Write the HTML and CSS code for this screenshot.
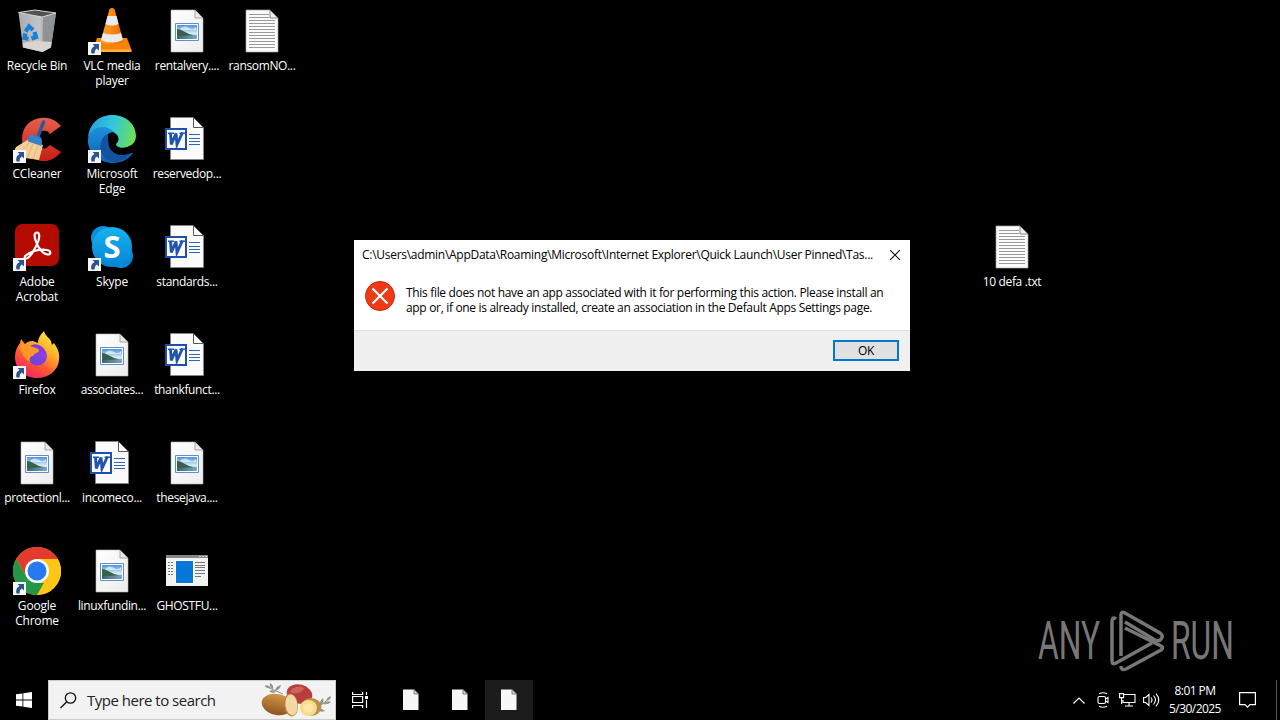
FILE: index.html
```html
<!DOCTYPE html>
<html lang="en">
<head>
  <meta charset="UTF-8">
  <meta name="viewport" content="width=device-width, initial-scale=1.0">
  <title>Desktop</title>
  <link rel="stylesheet" href="styles.css">
</head>
<body>
  <!-- shared icons -->
  <svg class="sprites" width="0" height="0">
    <defs>
      <linearGradient id="paper" x1="0" y1="0" x2="1" y2="1"><stop offset="0" stop-color="#fff"/><stop offset="1" stop-color="#ececec"/></linearGradient>
      <linearGradient id="sky" x1="0" y1="0" x2="0" y2="1"><stop offset="0" stop-color="#4f93dc"/><stop offset=".6" stop-color="#d5ecf8"/><stop offset="1" stop-color="#9cc4da"/></linearGradient>
      <linearGradient id="water" x1="0" y1="0" x2="1" y2="0"><stop offset="0" stop-color="#3a6474"/><stop offset="1" stop-color="#7eabc4"/></linearGradient>
    </defs>
    <symbol id="arrow" viewBox="0 0 13 13">
      <path fill="#f6f6f6" d="M0 0h13v13H0z"/>
      <path fill="#2c5590" d="M4.500 2H11v6.500L8.900 6.400C7 7.600 6.400 9.200 6.800 11.500H3.500C2.500 8 3.900 5.700 6.500 4.100z"/>
    </symbol>
    <symbol id="image" viewBox="0 0 48 48">
      <path fill="url(#paper)" stroke="#b5b5b5" stroke-width=".6" d="M8 3h24l8 8v34H8z"/>
      <path fill="#e9e9e9" stroke="#8a8a8a" stroke-width=".7" d="M32 3v8h8z"/>
      <path fill="#fff" stroke="#5f8fc0" d="M12.500 16.500h23v17h-23z"/>
      <path fill="url(#sky)" d="M14 18h20v14H14z"/>
      <path fill="#fff" opacity=".6" d="M18 21q4-3 8 0t7-1v3H17z"/>
      <path fill="url(#water)" d="M14 28h20v4H14z"/>
      <path fill="#376249" d="M14 22q4 0 7 2.500 4 2.500 10 3.800l-17 1z"/>
    </symbol>
    <symbol id="text" viewBox="0 0 48 48">
      <path fill="#fbfbfb" stroke="#a5a5a5" stroke-width=".7" d="M8 3h24l8 8v34H8z"/>
      <path stroke="#999" stroke-width="1" d="M11 7.500h20M11 10.500h20M11 13.500h26M11 16.500h26M11 19.500h26M11 22.500h26M11 25.500h26M11 28.500h26M11 31.500h26M11 34.500h26M11 37.500h26M11 40.500h26"/>
      <path fill="#eee" stroke="#6d6d6d" stroke-width=".8" d="M32 3v8h8z"/>
    </symbol>
    <symbol id="word" viewBox="0 0 48 48">
      <path fill="#fbfbfb" stroke="#888" stroke-width=".7" d="M7.500 2.500h23l10 10v32h-33z"/>
      <path fill="#fff" stroke="#444" stroke-width=".9" d="M30.500 2.500v10h10z"/>
      <path stroke="#2e65b8" d="M26 19.500h11M26 23.500h11M26 26.500h11M26 29.500h11"/>
      <path fill="#fff" stroke="#1d50ae" stroke-width="2" d="M3 14h20v20H3z"/>
      <path fill="none" stroke="#2153b0" stroke-width="2.900" d="M7.500 18l.8 11.500L13 18.500l1 11 5.500-12"/>
      <path stroke="#2153b0" stroke-width="1.500" d="M5 18.200h6M16.500 18.200h5.500"/>
    </symbol>
    <symbol id="blank" viewBox="0 0 16 22">
      <path fill="#f7f7f7" d="M0 .5h11l4.500 4.500v16H0z"/>
      <path fill="#ddd" stroke="#666" stroke-width=".8" d="M11 .5V5h4.500z"/>
    </symbol>
  </svg>

  <main class="desktop">
    <div class="column">
      <div class="item">
        <svg class="icon" viewBox="0 0 48 48">
          <defs><linearGradient id="bin" x1="0" x2="1"><stop offset="0" stop-color="#a9acaf"/><stop offset=".55" stop-color="#c3c5c7"/><stop offset="1" stop-color="#85888b"/></linearGradient></defs>
          <path fill="url(#bin)" d="M5.500 5.500L27 9.500 43 6l-5 34.500L29.500 45 10 40.500z"/>
          <path fill="#909396" d="M30 9.500L43 6l-5 34.500-8.500 4.500z"/>
          <path fill="#dad5cf" d="M9.500 36l14-2 15 1-.8 5.500-8.200 4.500-19.500-4.500z"/>
          <path fill="#4f5254" stroke="#d4d6d7" stroke-width="1" d="M5.500 5.500L22 3l21 3-14 4z"/>
          <path fill="none" stroke="#1781d6" stroke-width="4.300" d="M12.500 24.500l3.500-5 4 3.500M21.500 25l1.500 5-4.500 1.500M15.500 32l-4-1 .8-4.500"/>
        </svg>
        <span class="label label--wide">Recycle Bin</span>
      </div>
      <div class="item">
        <svg class="icon" viewBox="0 0 48 48">
          <defs><linearGradient id="cc" x1="0" y1="0" x2="0" y2="1"><stop offset="0" stop-color="#e5604b"/><stop offset="1" stop-color="#c71c13"/></linearGradient></defs>
          <path fill="url(#cc)" d="M48 11C43 5 36 2 28 3 16 4 9 13 9 24s8 21 20 22c8 .5 14-3 19-9l-11-7c-3 3-5 4-8 3-3-1-5-5-5-10 0-4 2-7 5-7 4-1 6 0 8 3z"/>
          <path stroke="#245c9d" stroke-width="3.500" stroke-linecap="round" d="M30.500 7l-6 16"/>
          <path fill="#f2cf99" d="M16 24L3 32q-2 2-1 5l10 6 14 2 4-15z"/>
          <path stroke="#d9b077" stroke-width=".8" fill="none" d="M16 28L6 39M20 29l-6 14M25 31l-5 13"/>
          <path fill="#3382ca" d="M18 19.500l9 2.500q3 1 1.500 9L15 26.500q0-6 3-7z"/>
        </svg>
        <svg class="shortcut"><use href="#arrow"/></svg>
        <span class="label label--wide">CCleaner</span>
      </div>
      <div class="item">
        <svg class="icon" viewBox="0 0 48 48">
          <rect x="2" y="1" width="44" height="42" rx="7.500" fill="#b30b00"/>
          <path fill="none" stroke="#fff" stroke-width="2.200" d="M24 9.500c-3 0-3 4-1 9 2 6 7 13 12 13 3.500 0 3-4-1-4.500-6-1-14 1-19 4-4 2-4 4.500-2 4.500 4 0 10-11 12.500-18 1.200-4 1-8-1.500-8z"/>
        </svg>
        <svg class="shortcut"><use href="#arrow"/></svg>
        <span class="label label--wide">Adobe<br>Acrobat</span>
      </div>
      <div class="item">
        <svg class="icon" viewBox="0 0 48 48">
          <defs>
            <linearGradient id="fire" x1=".85" y1="0" x2=".25" y2="1"><stop offset="0" stop-color="#fff04a"/><stop offset=".4" stop-color="#ffab26"/><stop offset=".7" stop-color="#ff5037"/><stop offset="1" stop-color="#ed2168"/></linearGradient>
            <linearGradient id="globe" x1="1" y1="0" x2="0" y2="1"><stop offset="0" stop-color="#a23bea"/><stop offset="1" stop-color="#5a48cf"/></linearGradient>
          </defs>
          <path fill="url(#fire)" d="M31 0c1 5 5 6 7 10l1 4 2-2c4 6 6 10 5 17-1 11-11 18-22 18C11 47 2 38 2 26c0-6 2-10 5-14l1-4 4 5c2-2 4-3 8-3l5 2c0-5 3-9 6-12z"/>
          <circle cx="24.500" cy="25" r="9.500" fill="url(#globe)"/>
          <path fill="#863bdc" d="M17 15c6-4 14-1 16 8l-7-3z"/>
          <path fill="#ff9826" d="M7 14c5-1 9 1 13 2 2 1 5 1 6 3 0 3-5 3-6 6-3 0-4 3-3 6-6-3-9-9-10-17z"/>
        </svg>
        <svg class="shortcut"><use href="#arrow"/></svg>
        <span class="label label--wide">Firefox</span>
      </div>
      <div class="item">
        <svg class="icon"><use href="#image"/></svg>
        <span class="label">protectionl...</span>
      </div>
      <div class="item">
        <svg class="icon" viewBox="0 0 48 48">
          <circle cx="24" cy="24" r="24" fill="#ffc517"/>
          <path fill="#e33b2e" d="M3.200 12A24 24 0 0 1 44.800 12H24L13.600 30z"/>
          <path fill="#249647" d="M3.200 12L13.600 30 24 36h10.400L24 48A24 24 0 0 1 3.200 12z"/>
          <path fill="#ffc517" d="M24 48l10.400-18L24 12h20.800A24 24 0 0 1 24 48z"/>
          <circle cx="24" cy="24" r="12" fill="#fff"/><circle cx="24" cy="24" r="9.500" fill="#2878ee"/>
        </svg>
        <svg class="shortcut"><use href="#arrow"/></svg>
        <span class="label label--wide">Google<br>Chrome</span>
      </div>
    </div>

    <div class="column">
      <div class="item">
        <svg class="icon" viewBox="0 0 48 48">
          <defs><linearGradient id="cone" x1="0" x2="1"><stop offset="0" stop-color="#ffa62c"/><stop offset="1" stop-color="#ee6b00"/></linearGradient></defs>
          <path fill="#f58407" d="M9 31h30l4.500 12H5z"/>
          <path fill="#ffb03a" d="M4.500 42.500h39V45h-39z"/>
          <path fill="url(#cone)" d="M21.500 2q2.500-2 5 0l9 33q-11.500 6-23 0z"/>
          <path fill="#e9ebed" d="M19.500 9h9l2 8q-6.500 3-13 0zM15 26q9 3 18 0l2 7q-11 5-22 0z"/>
        </svg>
        <svg class="shortcut"><use href="#arrow"/></svg>
        <span class="label label--wide">VLC media<br>player</span>
      </div>
      <div class="item">
        <svg class="icon" viewBox="0 0 48 48">
          <defs>
            <linearGradient id="edge1" x1="0" y1=".3" x2="1" y2=".5"><stop offset="0" stop-color="#249fde"/><stop offset=".5" stop-color="#35c6df"/><stop offset="1" stop-color="#6be052"/></linearGradient>
            <linearGradient id="edge2" x1="0" y1="0" x2="0" y2="1"><stop offset="0" stop-color="#1b91da"/><stop offset="1" stop-color="#0f62b5"/></linearGradient>
          </defs>
          <path fill="url(#edge1)" d="M0 23C1 9 11 0 24 0c15 0 24 10 24 21 0 8-7 12-14 12-4 0-7-2-6-4 5-4 2-10-3-12C14 11 3 15 0 23z"/>
          <path fill="url(#edge2)" d="M0 24c2-12 17-16 26-7-7 0-10 6-8 13 2 8 9 12 18 10 5-1 8-3 9-2-4 6-11 10-20 10C10 48-1 37 0 24z"/>
          <path fill="#12539f" d="M20 19c-6 2-9 10-7 17 2 7 8 11 15 11 7-1 12-5 16-9-10 5-21 1-23-7-1-5-1-8-1-12z"/>
          <path fill="#000" d="M29.500 25c-1 2-2 3-1.500 4 0 3 5 4.500 10 3.500l7-3v8c-9 4-18 1-22-5-3-5-3-11 1-12 4-.5 6.500 1.500 5.500 4.500z"/>
        </svg>
        <svg class="shortcut"><use href="#arrow"/></svg>
        <span class="label label--wide">Microsoft<br>Edge</span>
      </div>
      <div class="item">
        <svg class="icon" viewBox="0 0 48 48">
          <defs><linearGradient id="sk" x1="0" y1="0" x2="0" y2="1"><stop offset="0" stop-color="#14b3f0"/><stop offset="1" stop-color="#0884d5"/></linearGradient></defs>
          <circle cx="15" cy="15" r="12" fill="#0992dc"/><circle cx="33" cy="33" r="12" fill="#0787d8"/><circle cx="24" cy="24" r="20" fill="url(#sk)"/>
          <text class="skype-letter" x="24" y="35" text-anchor="middle">S</text>
        </svg>
        <svg class="shortcut"><use href="#arrow"/></svg>
        <span class="label label--wide">Skype</span>
      </div>
      <div class="item">
        <svg class="icon"><use href="#image"/></svg>
        <span class="label">associates...</span>
      </div>
      <div class="item">
        <svg class="icon"><use href="#word"/></svg>
        <span class="label">incomeco...</span>
      </div>
      <div class="item">
        <svg class="icon"><use href="#image"/></svg>
        <span class="label">linuxfundin...</span>
      </div>
    </div>

    <div class="column">
      <div class="item">
        <svg class="icon"><use href="#image"/></svg>
        <span class="label">rentalvery....</span>
      </div>
      <div class="item">
        <svg class="icon"><use href="#word"/></svg>
        <span class="label">reservedop...</span>
      </div>
      <div class="item">
        <svg class="icon"><use href="#word"/></svg>
        <span class="label">standards...</span>
      </div>
      <div class="item">
        <svg class="icon"><use href="#word"/></svg>
        <span class="label">thankfunct...</span>
      </div>
      <div class="item">
        <svg class="icon"><use href="#image"/></svg>
        <span class="label">thesejava....</span>
      </div>
      <div class="item">
        <svg class="icon" viewBox="0 0 48 48">
          <path fill="#f2f2f2" d="M3 8h42v31H3z"/><path fill="#888" d="M3 8h42v3H3z"/>
          <path fill="#fff" d="M12 13h19v24H12z"/><path fill="#0878d8" d="M13 14h17v22H13z"/>
          <path stroke="#777" stroke-dasharray="2 1" d="M5 15.500h6M5 18.500h6M5 21.500h6M5 24.500h6M5 27.500h6"/>
          <path stroke="#777" d="M32 15.500h10M32 18.500h10M32 20.500h10M32 23.500h10M32 26.500h10M32 29.500h6"/>
          <path stroke="#ddd" stroke-width=".8" d="M36 9.500h2M39 9.500h2M42 9.500h2"/>
        </svg>
        <span class="label">GHOSTFU...</span>
      </div>
    </div>

    <div class="column">
      <div class="item">
        <svg class="icon"><use href="#text"/></svg>
        <span class="label">ransomNO...</span>
      </div>
    </div>

    <div class="item item--loose">
      <svg class="icon"><use href="#text"/></svg>
      <span class="label">10 defa .txt</span>
    </div>

    <div class="watermark">
      <span>ANY</span>
      <svg width="56" height="62" viewBox="0 0 56 62" fill="none" stroke="#777" stroke-width="3.500">
        <path d="M7 9q-4-3-4 3v39q0 4 4 2L43 33"/>
        <path d="M12 46V5q0-4 4-2l35 20q4 3 1 6-2 3-6 1L16 12"/>
        <path d="M16 18l36 18q3 2 0 4L17 59q-5 2-5-3"/>
      </svg>
      <span>RUN</span>
    </div>
  </main>

  <div class="dialog">
    <div class="dialog__title">
      <span>C:\Users\admin\AppData\Roaming\Microsoft\Internet Explorer\Quick Launch\User Pinned\Tas...</span>
      <svg width="10" height="10" viewBox="0 0 10 10" stroke="#111" stroke-width="1.100"><path d="M0 0l10 10M10 0L0 10"/></svg>
    </div>
    <div class="dialog__body">
      <svg width="30" height="30" viewBox="0 0 30 30"><circle cx="15" cy="15" r="14.500" fill="#f03a17" stroke="#c3260e"/><path stroke="#fff" stroke-width="2.200" d="M7.500 7.500l15 15M22.500 7.500l-15 15"/></svg>
      <p>This file does not have an app associated with it for performing this action. Please install an<br>app or, if one is already installed, create an association in the Default Apps Settings page.</p>
    </div>
    <div class="dialog__footer"><button class="ok">OK</button></div>
  </div>

  <footer class="taskbar">
    <div class="start">
      <svg width="16" height="16" viewBox="0 0 16 16" fill="#fff"><path d="M0 2.300L6.500 1.400v6.200H0zM7.300 1.300L16 0v7.600H7.300zM0 8.400h6.500v6.200L0 13.700zM7.300 8.400H16V16l-8.700-1.300z"/></svg>
    </div>
    <div class="search">
      <svg width="17" height="17" viewBox="0 0 17 17" fill="none" stroke="#111" stroke-width="1.300"><circle cx="10.500" cy="6" r="5.200"/><path d="M6.800 9.700L.5 16"/></svg>
      <span>Type here to search</span>
      <svg class="potatoes" width="72" height="38" viewBox="0 0 72 38">
        <defs><linearGradient id="spud" x1="0" y1="0" x2="0" y2="1"><stop offset="0" stop-color="#d39848"/><stop offset="1" stop-color="#8d5520"/></linearGradient></defs>
        <path fill="none" stroke="#8b9383" stroke-width="1" d="M4 5l18 8M51 31l18-14"/>
        <path fill="#8f9788" d="M4 5q3-2 6 2-4 1-6-2zM9 2q4 2 3 6-4-2-3-6zM14 10q1-5 6-6-1 5-6 6zM8 10q4-2 7 1-4 2-7-1zM59 25q-1-5 3-8 2 5-3 8zM62 23q4-4 8-2-3 3-8 2zM65 20q1-4 5-5 0 4-5 5zM56 28q5-1 8 2-5 2-8-2z"/>
        <ellipse cx="38.500" cy="13" rx="13" ry="9.500" fill="#b93d3b" transform="rotate(15 38.500 13)"/>
        <ellipse cx="36" cy="9" rx="7" ry="3" fill="#d0625c" transform="rotate(-15 36 9)"/>
        <ellipse cx="16" cy="23.500" rx="15.500" ry="10.500" fill="url(#spud)" transform="rotate(12 16 23.500)"/>
        <ellipse cx="30" cy="24" rx="7" ry="11.500" fill="#b68243" transform="rotate(-8 30 24)"/>
        <ellipse cx="30.500" cy="24" rx="6" ry="10.500" fill="#f4d8a1" transform="rotate(-8 30.500 24)"/>
        <ellipse cx="50" cy="26" rx="10.500" ry="9" fill="#b6904a"/>
        <ellipse cx="47.500" cy="27" rx="8.500" ry="8" fill="#f8db88"/>
        <ellipse cx="47.500" cy="27" rx="5" ry="4.500" fill="#fbe7a6"/>
      </svg>
    </div>
    <div class="task task--view">
      <svg width="17" height="16" viewBox="0 0 17 16" fill="none" stroke="#fff" stroke-width="1.200"><path d="M.6 0v2.500h10V0M.6 16v-2.500h10V16M.6 4.500h10v6H.6zM14.500 0v3M14.500 8v8"/><path fill="#fff" stroke="none" d="M13 4h3v3h-3z"/></svg>
    </div>
    <div class="task"><svg width="16" height="22"><use href="#blank"/></svg></div>
    <div class="task"><svg width="16" height="22"><use href="#blank"/></svg></div>
    <div class="task task--active"><svg width="16" height="22"><use href="#blank"/></svg></div>
    <div class="tray">
      <div class="tray__icon"><svg width="12" height="7" viewBox="0 0 12 7" fill="none" stroke="#fff" stroke-width="1.200"><path d="M.5 6.500L6 1l5.500 5.500"/></svg></div>
      <div class="tray__icon"><svg width="12" height="16" viewBox="0 0 12 16" fill="none" stroke="#fff" stroke-width="1.100"><path d="M2 1.700q4-2 8 0M2 14.300q4 2 8 0"/><rect x="1" y="4.500" width="7.500" height="7" rx="1.500"/><path d="M8.500 7l2.500-1.500v5L8.500 9"/></svg></div>
      <div class="tray__icon"><svg width="17" height="14" viewBox="0 0 17 14" fill="none" stroke="#fff" stroke-width="1.100"><path d="M5 1.500h11v8H4V7M10 9.500V13M6 13h8M.6.600h4v4h-4zM2.600 4.600V11"/></svg></div>
      <div class="tray__icon"><svg width="17" height="14" viewBox="0 0 17 14" fill="none" stroke="#fff" stroke-width="1.100"><path d="M.6 4.500h2L6 1.500v11l-3.400-3h-2zM8 4.500q2 2.500 0 5M10.500 2.500q4 4.500 0 9M13 .7q5.500 6.300 0 12.600"/></svg></div>
      <div class="clock"><span>8:01 PM</span><span>5/30/2025</span></div>
      <svg class="notice" width="17" height="16" viewBox="0 0 17 16" fill="none" stroke="#fff" stroke-width="1.200"><path d="M.6.600h15.800v12H11l-2.500 2.500L6 12.600H.6z"/></svg>
      <div class="peek"></div>
    </div>
  </footer>
</body>
</html>
```
FILE: styles.css
```css
* {
  box-sizing: border-box;
  margin: 0;
  padding: 0;
}

body {
  display: flex;
  flex-direction: column;
  width: 1280px;
  height: 720px;
  overflow: hidden;
  background: #000;
  color: #fff;
  font-family: "Open Sans", "Noto Sans", sans-serif;
  font-size: 12px;
}

svg {
  display: block;
  flex-shrink: 0;
}

.sprites {
  position: absolute;
}

.desktop {
  display: flex;
  flex: 1;
}

.column {
  width: 75px;
}

.item {
  position: relative;
  display: flex;
  flex-direction: column;
  align-items: center;
  width: 74px;
  height: 108px;
  padding-top: 7px;
}

.icon {
  width: 48px;
  height: 48px;
}

/* arrow laid over the corner of the icon */
.shortcut {
  position: absolute;
  left: 13px;
  top: 42px;
  width: 13px;
  height: 13px;
}

.label {
  margin-top: 3px;
  line-height: 15px;
  letter-spacing: -0.35px;
  text-align: center;
  white-space: nowrap;
}

.label--wide {
  letter-spacing: -0.2px;
}

.item--loose {
  position: absolute;
  left: 975px;
  top: 216px;
}

.skype-letter {
  font: bold 31px "Open Sans", sans-serif;
  fill: #fff;
}

.watermark {
  position: absolute;
  left: 1038px;
  top: 610px;
  display: flex;
  align-items: center;
  color: #777;
}

.watermark span {
  width: 64px;
  font: 53px/62px Roboto, sans-serif;
  transform: scaleX(.6);
  transform-origin: left;
}

.watermark svg {
  margin: 0 6px 0 7px;
}

/* error dialog */
.dialog {
  position: absolute;
  left: 354px;
  top: 240px;
  width: 556px;
  height: 131px;
  display: flex;
  flex-direction: column;
  background: #fff;
  color: #000;
}

.dialog__title {
  display: flex;
  align-items: center;
  justify-content: space-between;
  height: 29px;
  padding: 0 10px 0 8px;
  letter-spacing: -0.28px;
  white-space: nowrap;
}

.dialog__body {
  display: flex;
  flex: 1;
  padding: 12px 0 0 11px;
}

.dialog__body p {
  margin: 4px 0 0 11px;
  line-height: 15px;
  letter-spacing: -0.325px;
  white-space: nowrap;
}

.dialog__footer {
  height: 41px;
  padding: 9px 11px;
  border-top: 1px solid #dfdfdf;
  background: #f0f0f0;
}

.ok {
  display: block;
  width: 66px;
  height: 21px;
  margin-left: auto;
  border: 2px solid #0078d7;
  background: #e1e1e1;
  font: inherit;
  line-height: 17px;
  letter-spacing: -0.3px;
}

/* taskbar */
.taskbar {
  display: flex;
  height: 40px;
}

.start,
.task {
  display: flex;
  align-items: center;
  justify-content: center;
  width: 48px;
}

.task {
  margin-right: 1px;
}

.task--view {
  margin-right: 3px;
}

.task--active {
  background: #1c1c1c;
}

.search {
  display: flex;
  align-items: center;
  width: 288px;
  padding: 0 2px 0 11px;
  border: 1px solid #ccc;
  background: #f2f2f2;
  color: #222;
  font-size: 15px;
}

.search span {
  margin-left: 10px;
  letter-spacing: -0.5px;
  white-space: nowrap;
}

.potatoes {
  margin-left: auto;
}

.tray {
  display: flex;
  align-items: center;
  margin-left: auto;
}

.tray__icon {
  display: flex;
  justify-content: center;
  width: 24px;
}

.clock {
  display: flex;
  flex-direction: column;
  width: 64px;
  line-height: 18px;
  letter-spacing: -0.55px;
  text-align: center;
}

.notice {
  margin: 0 20px 0 12px;
}

.peek {
  width: 4px;
  height: 40px;
  border-left: 1px solid #555;
}
```
